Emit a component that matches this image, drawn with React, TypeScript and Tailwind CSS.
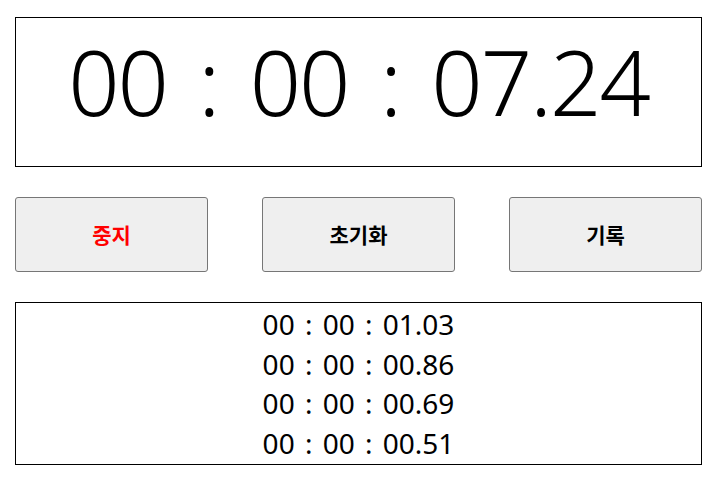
import React from "react";

export default function App() {
  const laps = ["00 : 00 : 01.03", "00 : 00 : 00.86", "00 : 00 : 00.69", "00 : 00 : 00.51"];
  return (
    <div className="w-[715px] h-[484px] bg-white pl-[15px] pt-[17px] font-['Noto_Sans',sans-serif] text-black">
      <div className="w-[687px] flex flex-col gap-[30px]">
        <div className="h-[150px] border border-black flex items-start justify-center pt-[18px]">
          <span className="text-[90px] leading-none font-light tracking-[-2px] [word-spacing:10px] whitespace-pre">
            00 : 00 : 07.24
          </span>
        </div>
        <div className="flex justify-between font-['Noto_Sans_CJK_KR',sans-serif]">
          <button className="w-[193px] h-[75px] bg-[#efefef] border border-[#767676] rounded-[3px] text-[21px] font-bold text-[#ff0000]">
            중지
          </button>
          <button className="w-[193px] h-[75px] bg-[#efefef] border border-[#767676] rounded-[3px] text-[21px] font-bold text-black">
            초기화
          </button>
          <button className="w-[193px] h-[75px] bg-[#efefef] border border-[#767676] rounded-[3px] text-[21px] font-bold text-black">
            기록
          </button>
        </div>
        <div className="h-[163px] border border-black flex flex-col items-center pt-[2px] text-[28px] leading-[39.5px] font-normal [word-spacing:3px] overflow-hidden">
          {laps.map((l) => (
            <div key={l} className="whitespace-pre">{l}</div>
          ))}
        </div>
      </div>
    </div>
  );
}
